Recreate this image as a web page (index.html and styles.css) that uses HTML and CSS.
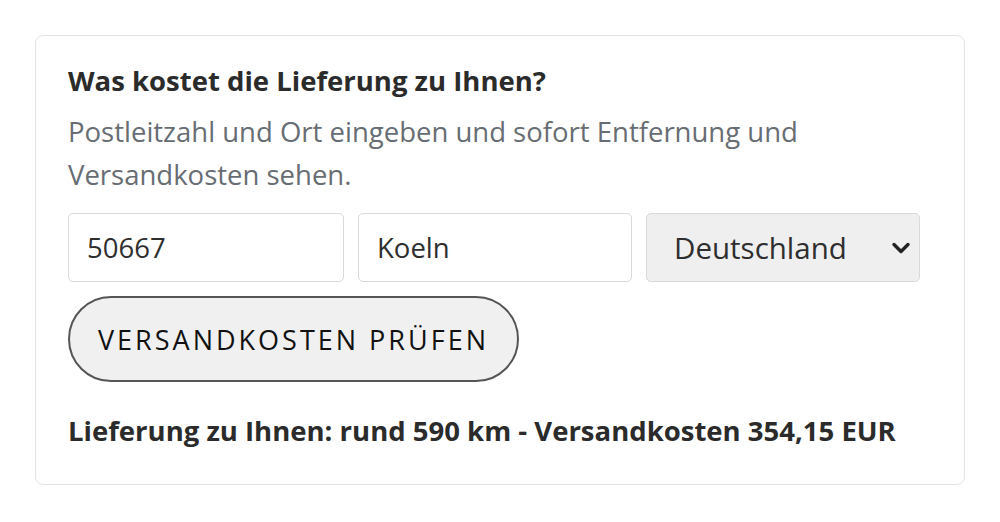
FILE: index.html
```html
<!DOCTYPE html>
<html lang="de">
<head>
<meta charset="utf-8">
<title>Versandkosten</title>
<link rel="stylesheet" href="styles.css">
</head>
<body>
<section class="card">
  <h2 class="title">Was kostet die Lieferung zu Ihnen?</h2>
  <p class="lead">Postleitzahl und Ort eingeben und sofort Entfernung und Versandkosten sehen.</p>
  <div class="fields">
    <input class="field" type="text" value="50667">
    <input class="field" type="text" value="Koeln">
    <div class="select">
      <span>Deutschland</span>
      <svg class="chev" viewBox="0 0 20 14" width="20" height="14"><path d="M3 3.5 L10 10.5 L17 3.5" fill="none" stroke="#222" stroke-width="3.4" stroke-linecap="round" stroke-linejoin="round"/></svg>
    </div>
  </div>
  <button class="btn" type="button">VERSANDKOSTEN PRÜFEN</button>
  <p class="result">Lieferung zu Ihnen: rund 590 km - Versandkosten 354,15 EUR</p>
</section>
</body>
</html>
```
FILE: styles.css
```css
* { box-sizing: border-box; }
body {
  margin: 0;
  background: #fff;
  font-family: "Open Sans", "Noto Sans", sans-serif;
}
.card {
  margin: 35px;
  width: 930px;
  height: 450px;
  border: 1.5px solid #e3e3e3;
  border-radius: 8px;
  padding: 27px 32px 0 32px;
}
.title {
  margin: 0;
  font-size: 27.5px;
  line-height: 36px;
  font-weight: 700;
  color: #2b2b2b;
}
.lead {
  margin: 11px 0 0 0;
  font-size: 27.5px;
  line-height: 43px;
  color: #676d73;
  max-width: 800px;
}
.fields {
  display: grid;
  grid-template-columns: 276px 274px 274px;
  column-gap: 14px;
  margin-top: 17px;
}
.field, .select {
  height: 69px;
  border: 1.5px solid #d9d9d9;
  border-radius: 5px;
  font-family: inherit;
  font-size: 27.5px;
  color: #2e2e2e;
  padding: 0 18px;
  background: #fff;
  outline: none;
}
.select {
  background: #efefef;
  display: flex;
  align-items: center;
  justify-content: space-between;
  padding: 0 8px 0 27px;
  font-size: 29.5px;
}
.chev { width: 20px; height: 14px; }
.btn {
  display: block;
  margin-top: 14px;
  height: 86px;
  padding: 0 28px;
  border: 2px solid #555;
  border-radius: 43px;
  background: #f0f0f0;
  font-family: inherit;
  font-size: 27px;
  font-weight: 500;
  letter-spacing: 3px;
  color: #111;
}
.result {
  margin: 30px 0 0 0;
  font-size: 27.5px;
  font-weight: 700;
  color: #2b2b2b;
}
```
